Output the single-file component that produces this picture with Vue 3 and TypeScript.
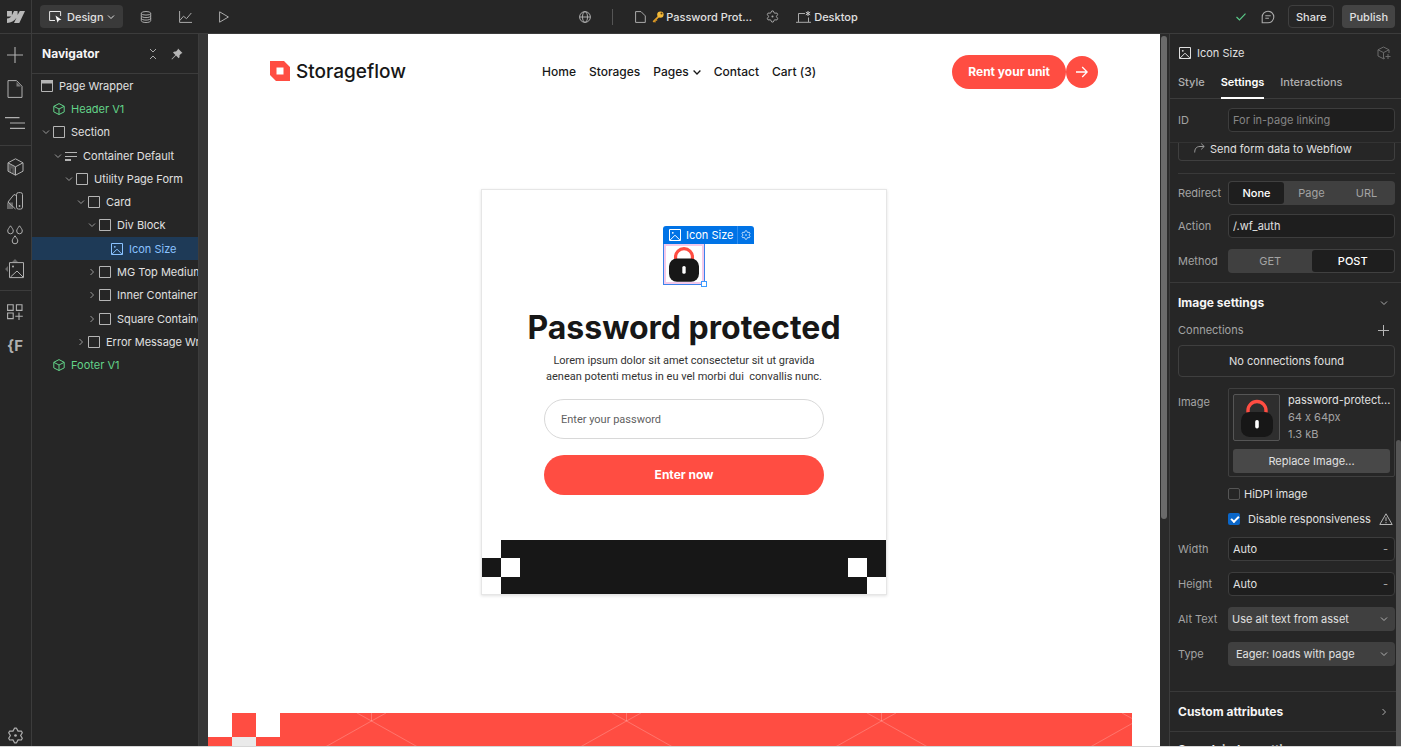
<script setup lang="ts">
import { ref } from 'vue'

interface TreeNode {
  label: string
  depth: number
  icon: 'page' | 'cube' | 'box' | 'lines' | 'image'
  arrow?: 'down' | 'right'
  green?: boolean
  selected?: boolean
}

const tree: TreeNode[] = [
  { label: 'Page Wrapper', depth: 0, icon: 'page' },
  { label: 'Header V1', depth: 1, icon: 'cube', green: true },
  { label: 'Section', depth: 1, icon: 'box', arrow: 'down' },
  { label: 'Container Default', depth: 2, icon: 'lines', arrow: 'down' },
  { label: 'Utility Page Form', depth: 3, icon: 'box', arrow: 'down' },
  { label: 'Card', depth: 4, icon: 'box', arrow: 'down' },
  { label: 'Div Block', depth: 5, icon: 'box', arrow: 'down' },
  { label: 'Icon Size', depth: 6, icon: 'image', selected: true },
  { label: 'MG Top Medium', depth: 5, icon: 'box', arrow: 'right' },
  { label: 'Inner Container', depth: 5, icon: 'box', arrow: 'right' },
  { label: 'Square Container', depth: 5, icon: 'box', arrow: 'right' },
  { label: 'Error Message Wrapper', depth: 4, icon: 'box', arrow: 'right' },
  { label: 'Footer V1', depth: 1, icon: 'cube', green: true },
]

const railGroups: { name: string; label: string }[][] = [
  [
    { name: 'plus', label: 'Add elements' },
    { name: 'file', label: 'Pages' },
    { name: 'nav', label: 'Navigator' },
  ],
  [
    { name: 'block', label: 'Components' },
    { name: 'swatch', label: 'Variables' },
    { name: 'drops', label: 'Style selectors' },
    { name: 'assets', label: 'Assets' },
  ],
  [
    { name: 'apps', label: 'Apps' },
    { name: 'finsweet', label: 'Finsweet' },
  ],
]

const tabs = ['Style', 'Settings', 'Interactions']
const activeTab = ref('Settings')
const redirects = ['None', 'Page', 'URL']
const redirect = ref('None')
const methods = ['GET', 'POST']
const method = ref('POST')
const elementId = ref('')
const action = ref('/.wf_auth')
const width = ref('Auto')
const height = ref('Auto')
const hidpi = ref(false)
const fixedSize = ref(true)
const password = ref('')
</script>

<template>
  <div class="app">
    <svg class="defs" aria-hidden="true">
      <symbol id="i-page" viewBox="0 0 12 12"><path d="M.5 .5h11v11H.5z" fill="none" stroke="currentColor" /><path d="M0 0h12v3.500H0z" fill="currentColor" /></symbol>
      <symbol id="i-box" viewBox="0 0 12 12"><path d="M.5 .5h11v11H.5z" fill="none" stroke="currentColor" /></symbol>
      <symbol id="i-lines" viewBox="0 0 12 12"><path d="M0 2.500h12M0 6.500h12" stroke="currentColor" fill="none" /><path d="M0 9h6v2H0z" fill="currentColor" /></symbol>
      <symbol id="i-cube" viewBox="0 0 12 12"><path d="M6 .6l5.200 2.700v5.600L6 11.500 .8 8.900V3.300zM.8 3.300L6 6l5.200-2.700M6 6v5.500" fill="none" stroke="currentColor" stroke-linejoin="round" /></symbol>
      <symbol id="i-image" viewBox="0 0 12 12"><path d="M.5 .5h11v11H.5zM1 11.200l5-5 5 5" fill="none" stroke="currentColor" /><circle cx="3.800" cy="3.800" r=".9" fill="currentColor" /></symbol>
      <symbol id="i-down" viewBox="0 0 8 8"><path d="M1 2.500l3 3 3-3" fill="none" stroke="currentColor" /></symbol>
      <symbol id="i-right" viewBox="0 0 8 8"><path d="M2.500 1l3 3-3 3" fill="none" stroke="currentColor" /></symbol>
      <symbol id="i-gear" viewBox="0 0 14 14"><path d="M6.200 1h1.600l1.300 2.400 2.700-.1.800 1.400L11.200 7l1.400 2.300-.8 1.400-2.700-.1L7.800 13H6.200l-1.300-2.400-2.700.1-.8-1.400L2.800 7 1.400 4.700l.8-1.400 2.700.1z" fill="none" stroke="currentColor" stroke-linejoin="round" /><circle cx="7" cy="7" r="1.100" fill="currentColor" /></symbol>
      <symbol id="i-lock" viewBox="0 0 32 38"><path d="M7 16v-4.500a9 9 0 0 1 18 0V16" fill="none" stroke="#ff4d42" stroke-width="3.400" /><rect x="0" y="13" width="32" height="25" rx="8.500" fill="#171717" /><rect x="14.200" y="21" width="3.600" height="8.500" rx="1.700" fill="#fff" /></symbol>
    </svg>

    <header class="topbar">
      <div class="top-left">
        <a class="brand" href="#" aria-label="Webflow">
          <svg width="18" height="12" viewBox="0 0 18 12"><path d="M18 0l-5.700 12H7l2.400-4.900h-.1C7.300 9.900 4.300 11.700 0 12V7.400s2.800-.2 4.400-2H0V0h4.900v4.200L7 0h3.600v4.100L12.800 0z" fill="#b8b8b8" /></svg>
        </a>
        <button class="design" type="button">
          <svg width="13" height="12" viewBox="0 0 13 12"><path d="M6 9.500H.6v-9h11V5" fill="none" stroke="#e6e6e6" /><path d="M6.500 4.500l6 4.200-2.600.5-1.400 2.600z" fill="#f5f5f5" /></svg>
          Design
          <svg width="8" height="8"><use href="#i-down" /></svg>
        </button>
        <div class="top-tools">
          <button type="button" aria-label="CMS"><svg width="12" height="12" viewBox="0 0 12 12"><g fill="none" stroke="currentColor"><ellipse cx="6" cy="2.300" rx="4.700" ry="1.800" /><path d="M1.300 2.300v7.400c0 1 2 1.800 4.700 1.800s4.700-.8 4.700-1.800V2.300M1.300 4.800c0 1 2 1.800 4.700 1.800s4.700-.8 4.700-1.800M1.300 7.300c0 1 2 1.800 4.700 1.800s4.700-.8 4.700-1.800" /></g></svg></button>
          <button type="button" aria-label="Insights"><svg width="13" height="12" viewBox="0 0 13 12"><path d="M.6 0v11.400H13M.8 9.500l3.700-4.300 3 2.500L12.300 2" fill="none" stroke="currentColor" /></svg></button>
          <button type="button" aria-label="Preview"><svg width="12" height="12" viewBox="0 0 12 12"><path d="M1.600 .8v10.400L10.400 6z" fill="none" stroke="currentColor" stroke-linejoin="round" /></svg></button>
        </div>
      </div>

      <div class="top-mid">
        <button type="button" aria-label="Locale"><svg width="12" height="12" viewBox="0 0 12 12"><g fill="none" stroke="currentColor"><circle cx="6" cy="6" r="5.400" /><ellipse cx="6" cy="6" rx="2.500" ry="5.400" /><path d="M.6 6h10.800" /></g></svg></button>
        <span class="divider"></span>
        <button class="page-name" type="button">
          <svg width="11" height="12" viewBox="0 0 11 12"><path d="M.6 .6h5.400l4.300 4.300v6.500H.6z" fill="none" stroke="#aaa" /></svg>
          <svg class="key" width="12" height="12" viewBox="0 0 12 12"><path d="M6.800 5.300L1.200 10.900" stroke="#e3a32c" stroke-width="1.700" /><path d="M2 9.800l1.500 1.500M3.600 8.200l1.400 1.400" stroke="#d68f20" stroke-width="1.300" /><circle cx="8.400" cy="3.600" r="3.200" fill="#f2b938" /><circle cx="9.500" cy="2.500" r="1" fill="#5a3b12" /></svg>
          <span>Password Prot...</span>
        </button>
        <button class="gear" type="button" aria-label="Page settings"><svg width="13" height="13"><use href="#i-gear" /></svg></button>
        <button class="desktop" type="button">
          <svg width="15" height="12" viewBox="0 0 15 12"><path d="M2.500 11V2.500H9M12.500 6.500V11M0 11.300h15" fill="none" stroke="#aaa" /><path d="M12 0v5M9.800 1.200l4.400 2.600M14.200 1.200L9.800 3.800" stroke="#ccc" fill="none" /></svg>
          Desktop
        </button>
      </div>

      <div class="top-right">
        <svg class="check" width="10" height="8" viewBox="0 0 10 8"><path d="M.5 4l3 3 6-6.300" fill="none" stroke="#5ac988" stroke-width="1.200" /></svg>
        <button class="comment" type="button" aria-label="Comments"><svg width="14" height="14" viewBox="0 0 14 14"><path d="M1.200 12.800V7a5.800 5.800 0 1 1 5.800 5.800zM4.300 5.700h5.400M4.300 8.300h3.600" fill="none" stroke="currentColor" stroke-width="1.100" /></svg></button>
        <button class="share" type="button">Share</button>
        <button class="publish" type="button">Publish</button>
      </div>
    </header>

    <div class="workspace">
      <nav class="rail" aria-label="Tools">
        <div v-for="(group, g) in railGroups" :key="g" class="rail-group">
          <button v-for="tool in group" :key="tool.name" type="button" :aria-label="tool.label">
            <svg v-if="tool.name === 'plus'" width="16" height="16" viewBox="0 0 16 16"><path d="M8 0v16M0 8h16" stroke="currentColor" fill="none" stroke-width="1.100" /></svg>
            <svg v-else-if="tool.name === 'file'" width="16" height="18" viewBox="0 0 16 18"><path d="M1 .6h8.500L15 6.300V17.400H1z" fill="none" stroke="currentColor" /><path d="M9.500 2v4.500H14z" fill="#777" /></svg>
            <svg v-else-if="tool.name === 'nav'" width="20" height="12" viewBox="0 0 20 12"><path d="M0 .6h14.500M5 6h15M5 11.400h15" stroke="currentColor" fill="none" stroke-width="1.100" /></svg>
            <svg v-else-if="tool.name === 'block'" width="17" height="18" viewBox="0 0 17 18"><path d="M1 5l7.500 4v8L1 13z" fill="#555" /><path d="M8.500 .8L16 4.800v8.400l-7.500 4-7.500-4V4.800zM1 4.800l7.500 4 7.500-4M8.500 8.800v8.400" fill="none" stroke="currentColor" stroke-linejoin="round" /><path d="M4.800 10.500v3.800M10 5l-3 1.500" stroke="#262626" /></svg>
            <svg v-else-if="tool.name === 'swatch'" width="17" height="18" viewBox="0 0 17 18"><path d="M0 10.500h6V17H0z" fill="#666" /><rect x="9.500" y=".6" width="6" height="16.500" rx="2" fill="none" stroke="currentColor" /><path d="M9.500 3.500L7 2.500 1 10l7.500 7" fill="none" stroke="currentColor" stroke-linejoin="round" /><circle cx="12.500" cy="14" r=".9" fill="currentColor" /></svg>
            <svg v-else-if="tool.name === 'drops'" width="16" height="20" viewBox="0 0 16 20"><g fill="none" stroke="currentColor"><path d="M3.500 .8C5 3 6.300 4.400 6.300 6a2.800 2.800 0 0 1-5.600 0C.7 4.400 2 3 3.500 .8zM12.500 .8c1.500 2.200 2.800 3.600 2.800 5.200a2.800 2.800 0 0 1-5.600 0c0-1.600 1.300-3 2.800-5.200zM8 10.800c1.500 2.200 2.800 3.600 2.800 5.200a2.800 2.800 0 0 1-5.600 0c0-1.600 1.300-3 2.800-5.200z" /></g></svg>
            <svg v-else-if="tool.name === 'assets'" width="20" height="20" viewBox="0 0 20 20"><path d="M7 3l3-3 3 3zM3 7L0 10l3 3z" fill="#666" /><path d="M4.500 3.600h14v15h-14zM5.500 18l6.500-6 6 6" fill="none" stroke="currentColor" /><circle cx="8" cy="7.500" r="1" fill="currentColor" /></svg>
            <svg v-else-if="tool.name === 'apps'" width="16" height="16" viewBox="0 0 16 16"><path d="M.6 .8h5.600v5.600H.6zM9.400 .8H15v5.600H9.400zM.6 9h5.600v5.600H.6zM12 8.500V16M8.300 12.200h7.500" fill="none" stroke="currentColor" stroke-width="1.100" /></svg>
            <span v-else class="fs">{F</span>
          </button>
        </div>
        <button class="rail-end" type="button" aria-label="Project settings"><svg width="17" height="17"><use href="#i-gear" /></svg></button>
      </nav>

      <aside class="navigator">
        <div class="nav-head">
          <h2>Navigator</h2>
          <button type="button" aria-label="Collapse all"><svg width="8" height="12" viewBox="0 0 8 12"><path d="M1 1l3 3 3-3M1 11l3-3 3 3" fill="none" stroke="currentColor" /></svg></button>
          <button type="button" aria-label="Pin"><svg width="12" height="12" viewBox="0 0 12 12"><path d="M7 .5L11.500 5l-1.200.4-1.800 1.800c.3 1.300 0 2.200-.8 3L5 7.600 1 11.500.5 11l3.900-4L2 4.400c.8-.8 1.700-1.100 3-.8l1.700-1.800z" fill="#b5b5b5" /></svg></button>
        </div>
        <ul class="tree">
          <li v-for="node in tree" :key="node.label" :class="['depth-' + node.depth, { green: node.green, selected: node.selected }]">
            <svg v-if="node.arrow" class="arrow" width="8" height="8"><use :href="'#i-' + node.arrow" /></svg>
            <span v-else class="arrow"></span>
            <svg class="kind" width="12" height="12"><use :href="'#i-' + node.icon" /></svg>
            <span class="name">{{ node.label }}</span>
          </li>
        </ul>
      </aside>

      <main class="canvas">
        <div class="site">
          <header class="site-head">
            <a class="logo" href="#">
              <svg width="20" height="20" viewBox="0 0 20 20"><path d="M0 0h14L20 6V20H6L0 14zM6.500 6.500v7h7v-7z" fill="#ff4d42" fill-rule="evenodd" /></svg>
              Storageflow
            </a>
            <nav class="links">
              <a href="#">Home</a>
              <a href="#">Storages</a>
              <a href="#">Pages <svg width="8" height="8" viewBox="0 0 8 8"><path d="M.6 2.500L4 6l3.400-3.500" fill="none" stroke="#171717" stroke-width="1.300" /></svg></a>
              <a href="#">Contact</a>
              <a href="#">Cart (3)</a>
            </nav>
            <a class="cta" href="#">
              <span>Rent your unit</span>
              <i><svg width="12" height="12" viewBox="0 0 12 12"><path d="M0 6h11.200M6.200 1l5 5-5 5" fill="none" stroke="#fff" stroke-width="1.300" /></svg></i>
            </a>
          </header>

          <section class="card">
            <div class="picked">
              <svg width="30" height="36"><use href="#i-lock" /></svg>
              <div class="tag">
                <svg width="12" height="12"><use href="#i-image" /></svg>
                <span>Icon Size</span>
                <button type="button" aria-label="Element settings"><svg width="10" height="10"><use href="#i-gear" /></svg></button>
              </div>
              <span class="handle"></span>
            </div>
            <h1>Password protected</h1>
            <p>Lorem ipsum dolor sit amet consectetur sit ut gravida<br />aenean potenti metus in eu vel morbi dui&nbsp; convallis nunc.</p>
            <form @submit.prevent>
              <input v-model="password" type="password" placeholder="Enter your password" aria-label="Password" />
              <button type="submit">Enter now</button>
            </form>
            <div class="band">
              <div class="corner"><b></b><i></i><i></i><b></b><b></b><i></i></div>
              <div class="corner"><i></i><i></i><b></b><i></i><i></i><b></b></div>
            </div>
          </section>

          <footer class="site-foot">
            <svg width="100%" height="100%">
              <defs>
                <pattern id="rays" x="36" width="255" height="60" patternUnits="userSpaceOnUse">
                  <path d="M127.500 8V0M127.500 8L113 0M127.500 8L142 0M127.500 8L35 60M127.500 8L220 60" stroke="#fff" stroke-opacity=".22" fill="none" />
                </pattern>
              </defs>
              <rect width="100%" height="100%" fill="url(#rays)" />
            </svg>
            <div class="squares"><b></b><i></i><b></b><i></i><em></em><i></i></div>
          </footer>
        </div>
      </main>
      <div class="canvas-scroll"><span></span></div>

      <aside class="panel">
        <div class="panel-head">
          <svg width="12" height="12"><use href="#i-image" /></svg>
          <span>Icon Size</span>
          <button type="button" aria-label="Create component"><svg width="14" height="14" viewBox="0 0 14 14"><path d="M8 12l-1.500.8L1 10V3.800L6.500 1 12 3.800V7M1 3.800l5.500 2.800L12 3.800M6.500 6.600v6.200M8.500 10.500h5M11 8v5" fill="none" stroke="currentColor" /></svg></button>
        </div>
        <div class="tabs" role="tablist">
          <button v-for="tab in tabs" :key="tab" type="button" role="tab" :aria-selected="tab === activeTab" :class="{ on: tab === activeTab }" @click="activeTab = tab">{{ tab }}</button>
        </div>
        <div class="id-row row">
          <label for="el-id">ID</label>
          <input id="el-id" v-model="elementId" placeholder="For in-page linking" />
        </div>

        <div class="panel-body">
          <div class="panel-content">
            <div class="pad">
              <button class="send" type="button"><svg width="11" height="10" viewBox="0 0 11 10"><path d="M.7 9.500C.7 5.500 2.500 3.500 6 3.500h4.200M7.200 .6l3 2.900-3 2.900" fill="none" stroke="#999" /></svg>Send form data to Webflow</button>
            </div>
            <hr class="inset" />
            <div class="row r1">
              <span id="l-redirect">Redirect</span>
              <div class="seg" role="group" aria-labelledby="l-redirect">
                <button v-for="r in redirects" :key="r" type="button" :class="{ on: r === redirect }" @click="redirect = r">{{ r }}</button>
              </div>
            </div>
            <div class="row r2">
              <label for="action">Action</label>
              <input id="action" v-model="action" />
            </div>
            <div class="row r1">
              <span id="l-method">Method</span>
              <div class="seg" role="group" aria-labelledby="l-method">
                <button v-for="m in methods" :key="m" type="button" :class="{ on: m === method }" @click="method = m">{{ m }}</button>
              </div>
            </div>
            <hr />
            <div class="section-head"><h3>Image settings</h3><svg width="8" height="8"><use href="#i-down" /></svg></div>
            <div class="connections"><span>Connections</span><button type="button" aria-label="Add connection"><svg width="11" height="11" viewBox="0 0 11 11"><path d="M5.500 0v11M0 5.500h11" stroke="currentColor" fill="none" /></svg></button></div>
            <div class="pad"><div class="none">No connections found</div></div>
            <div class="row top">
              <span class="lift">Image</span>
              <div class="asset">
                <div class="asset-info">
                  <div class="thumb"><svg width="32" height="38"><use href="#i-lock" /></svg></div>
                  <div class="meta"><b>password-protect...</b><span>64 x 64px</span><span>1.3 kB</span></div>
                </div>
                <button type="button">Replace Image...</button>
              </div>
            </div>
            <div class="tick"><input id="hidpi" v-model="hidpi" type="checkbox" /><label for="hidpi">HiDPI image</label></div>
            <div class="tick far"><input id="fixed" v-model="fixedSize" type="checkbox" /><label for="fixed">Disable responsiveness</label>
              <svg width="14" height="12" viewBox="0 0 14 12"><path d="M7 .8l6.200 10.700H.8zM7 4.300v3.800M7 9v1.300" fill="none" stroke="#b5b5b5" stroke-linejoin="round" /></svg>
            </div>
            <div class="row r2"><label for="w">Width</label><div class="unit"><input id="w" v-model="width" /><span>-</span></div></div>
            <div class="row r2"><label for="h">Height</label><div class="unit"><input id="h" v-model="height" /><span>-</span></div></div>
            <div class="row r2"><label for="alt">Alt Text</label>
              <div class="pick"><select id="alt"><option>Use alt text from asset</option><option>Decorative</option></select><svg width="8" height="8"><use href="#i-down" /></svg></div>
            </div>
            <div class="row last"><label for="load">Type</label>
              <div class="pick"><select id="load" class="indent"><option>Eager: loads with page</option><option>Lazy: loads on scroll</option></select><svg width="8" height="8"><use href="#i-down" /></svg></div>
            </div>
            <hr />
            <div class="section-head"><h3>Custom attributes</h3><svg width="8" height="8"><use href="#i-right" /></svg></div>
            <hr />
            <div class="section-head next"><h3>Search index settings</h3></div>
          </div>
          <div class="panel-thumb"></div>
        </div>
      </aside>
    </div>
  </div>
</template>

<style>
body { background: #262626; }
</style>

<style scoped>
* { box-sizing: border-box; }
.app {
  display: flex;
  flex-direction: column;
  height: 100vh;
  overflow: hidden;
  background: #262626;
  border-bottom: 1px solid #d6d6d6;
  color: #e0e0e0;
  font: 11px/16px Inter, "Liberation Sans", sans-serif;
  font-feature-settings: "calt" 0;
}
.defs { position: absolute; width: 0; height: 0; }
svg { display: block; flex: none; }
button, input, select { font: inherit; color: inherit; margin: 0; }
button { border: 0; padding: 0; background: none; }
a { color: inherit; text-decoration: none; }
h1, h2, h3, p, ul { margin: 0; padding: 0; }
hr { border: 0; border-top: 1px solid #393939; margin: 0; }

.topbar {
  display: grid;
  grid-template-columns: 1fr auto 1fr;
  flex: none;
  height: 34px;
  border-bottom: 1px solid #3c3c3c;
}
.topbar button, .top-left, .top-mid, .top-right, .top-tools { display: flex; align-items: center; }
.brand { display: flex; align-items: center; width: 32px; height: 33px; padding-left: 7px; border-right: 1px solid #3c3c3c; }
.design { height: 23px; margin-left: 8px; padding: 0 8px 0 9px; gap: 5px; border-radius: 4px; background: #3a3a3a; font-weight: 500; }
.design svg:last-child { margin-left: -2px; }
.top-tools { margin-left: 4px; }
.top-tools button { width: 39px; height: 33px; justify-content: center; color: #aaa; }
.top-mid { padding-left: 36px; color: #aaa; }
.divider { width: 1px; height: 16px; margin: 0 22px 0 21px; background: #555; }
.page-name { gap: 6px; color: #e0e0e0; font-weight: 500; }
.page-name .key { margin-right: -4px; }
.gear { margin: 0 17px 0 14px; color: #aaa; }
.desktop { gap: 3px; color: #e0e0e0; font-weight: 500; }
.top-right { justify-content: flex-end; padding-right: 6px; }
.check { margin-right: 15px; }
.comment { margin-right: 13px; color: #aaa; }
.share, .publish { height: 23px; border-radius: 4px; font-weight: 500; }
.share { margin-right: 8px; padding: 0 7px; border: 1px solid #3f3f3f; }
.publish { padding: 0 7px; background: #444; }

.workspace { display: flex; flex: 1; min-height: 0; }
.rail { display: flex; flex-direction: column; flex: none; width: 32px; border-right: 1px solid #3c3c3c; color: #b0b0b0; }
.rail-group { padding: 4px 0; border-bottom: 1px solid #3c3c3c; }
.rail-group:first-child { padding-bottom: 5px; }
.rail-group:nth-child(3) { border-bottom: 0; }
.rail button { display: flex; align-items: center; justify-content: center; width: 30px; height: 34px; }
.rail .rail-end { height: 22px; margin-top: auto; }
.fs { font-size: 15px; font-weight: 700; }

.navigator { flex: none; width: 167px; border-right: 1px solid #3c3c3c; overflow: hidden; }
.nav-head { display: flex; align-items: center; height: 40px; padding: 0 15px 0 10px; border-bottom: 1px solid #3c3c3c; color: #aaa; }
.nav-head h2 { flex: 1; color: #f5f5f5; font-size: 12px; font-weight: 700; }
.nav-head button + button { margin-left: 14px; }
.tree { display: grid; grid-auto-rows: 1fr; height: 303px; list-style: none; }
.tree li { display: flex; align-items: center; white-space: nowrap; }
.arrow { flex: none; width: 8px; margin-right: 3px; color: #999; }
.kind { margin-right: 6px; color: #b5b5b5; }
.green, .green .kind { color: #63d489; }
.selected { background: #1e3a57; }
.selected, .selected .kind { color: #8ac2ff; }
.depth-0 .arrow { margin-right: 1px; }
.depth-1 { padding-left: 10px; }
.depth-2 { padding-left: 22px; }
.depth-3 { padding-left: 33px; }
.depth-4 { padding-left: 45px; }
.depth-5 { padding-left: 56px; }
.depth-6 { padding-left: 68px; }

.canvas { flex: 1; min-width: 0; padding-left: 9px; background: #363636; overflow: hidden; }
.site { height: 100%; background: #fff; color: #171717; overflow: hidden; }
.site-head { display: flex; align-items: center; justify-content: space-between; height: 76px; padding: 0 62px; }
.logo { display: flex; align-items: center; gap: 6px; font-size: 19px; font-weight: 500; line-height: 24px; }
.logo svg { margin-bottom: 2px; }
.links { display: flex; gap: 13px; font-size: 12px; font-weight: 500; }
.links a { display: flex; align-items: center; gap: 4px; }
.cta { display: flex; align-items: center; color: #fff; font-size: 12px; font-weight: 700; }
.cta span { padding: 9px 16px; border-radius: 17px; background: #ff4d42; }
.cta i { display: flex; align-items: center; justify-content: center; width: 32px; height: 32px; border-radius: 50%; background: #ff4d42; }

.card {
  width: 406px;
  margin: 79px auto 118px;
  padding-top: 53px;
  border: 1px solid #e6e6e6;
  box-shadow: 0 1px 3px rgba(0, 0, 0, .12);
  text-align: center;
}
.picked {
  position: relative;
  display: flex;
  justify-content: center;
  width: 42px;
  height: 42px;
  margin: 0 auto;
  padding-top: 2px;
  border: 1px solid #3b82ea;
  box-shadow: inset 0 0 0 2px #f3c9ea;
}
.tag {
  position: absolute;
  left: -1px;
  bottom: 40px;
  display: flex;
  align-items: center;
  height: 18px;
  padding-left: 6px;
  border-radius: 3px 3px 0 0;
  background: #0073e6;
  color: #fff;
  white-space: nowrap;
}
.tag span { margin: 0 4px 0 5px; }
.tag button { display: flex; align-items: center; height: 18px; padding: 0 3px; border-left: 1px solid #2f8df0; }
.handle { position: absolute; right: -3px; bottom: -3px; width: 6px; height: 6px; border: 1px solid #3b9bff; background: #fff; }
h1 { margin-top: 23px; font-size: 32px; font-weight: 700; line-height: 40px; }
.card p, form input { font-family: Roboto, Inter, sans-serif; }
.card p { margin-top: 5px; color: #333; white-space: nowrap; }
form { width: 280px; margin: 14px auto 45px; }
form input { display: block; width: 100%; height: 40px; padding: 0 16px; border: 1px solid #d8d8d8; border-radius: 20px; background: #fff; outline: 0; }
form input::placeholder { color: #5f5f5f; opacity: 1; }
form button { display: block; width: 100%; height: 40px; margin-top: 16px; border-radius: 20px; background: #ff4d42; color: #fff; font-size: 12px; font-weight: 700; }
.band { display: flex; justify-content: space-between; height: 54px; background: #171717; }
.corner { display: grid; grid-template-columns: 19px 19px; grid-template-rows: 18px 19px 17px; }
.corner b, .squares b { background: #fff; }

.site-foot { position: relative; height: 120px; margin-right: 28px; background: #ff4d42; }
.squares { position: absolute; left: 0; top: 0; display: grid; grid-template-columns: repeat(3, 24px); grid-auto-rows: 24px; }
.squares em { background: #eaeaea; }
.squares i { background: #ff4d42; }

.canvas-scroll { flex: none; width: 9px; padding: 2px 2px 0 1px; background: #2a2a2a; }
.canvas-scroll span { display: block; height: 68%; border-radius: 3px; background: #6a6a6a; }

.panel { display: flex; flex-direction: column; flex: none; width: 232px; border-left: 1px solid #3c3c3c; }
.panel-head { display: flex; align-items: center; flex: none; height: 38px; padding: 0 10px 0 9px; color: #e0e0e0; }
.panel-head span { flex: 1; margin-left: 6px; }
.panel-head button { color: #6a6a6a; }
.tabs { display: flex; flex: none; gap: 16px; height: 27px; padding-left: 8px; border-bottom: 1px solid #3c3c3c; }
.tabs button { height: 27px; padding-bottom: 5px; border-bottom: 2px solid transparent; color: #b0b0b0; font-weight: 500; }
.tabs .on { border-color: #fff; color: #fff; font-weight: 600; }
.row { display: grid; grid-template-columns: 50px 1fr; align-items: center; padding: 0 6px 0 8px; }
.row > label, .row > span, .connections span { color: #a3a3a3; }
.row input { width: 100%; min-width: 0; height: 24px; padding: 0 4px; border: 1px solid #3d3d3d; border-radius: 4px; background: #1e1e1e; outline: 0; }
.row input::placeholder { color: #858585; opacity: 1; }
.id-row { flex: none; height: 44px; padding-bottom: 1px; border-bottom: 1px solid #333; }
.panel-body { position: relative; flex: 1; min-height: 0; overflow: hidden; }
.pad { padding: 0 6px 0 8px; }
.send { display: flex; align-items: flex-start; width: 100%; height: 18px; padding-left: 15px; gap: 5px; border: 1px solid #3f3f3f; border-top: 0; border-radius: 0 0 4px 4px; line-height: 12px; }
.inset { margin: 12px 6px 7px 8px; }
.r1 { margin-bottom: 9px; }
.r2 { margin-bottom: 11px; }
.last { margin-bottom: 25px; }
.seg { display: grid; grid-auto-flow: column; grid-auto-columns: 1fr; height: 24px; padding: 1px; border-radius: 4px; background: #404040; color: #a3a3a3; }
.seg .on { border-radius: 3px; background: #1e1e1e; color: #fff; font-weight: 500; }
.section-head { display: flex; align-items: center; justify-content: space-between; height: 39px; padding: 0 13px 0 8px; color: #aaa; }
.section-head h3 { color: #f5f5f5; font-size: 12px; font-weight: 700; }
.next { height: 36px; }
.connections { display: flex; align-items: center; justify-content: space-between; height: 16px; margin-bottom: 7px; padding: 0 12px 0 8px; color: #b5b5b5; }
.none { height: 32px; margin-bottom: 11px; border: 1px solid #3f3f3f; border-radius: 4px; line-height: 30px; text-align: center; }
.top { align-items: start; margin-bottom: 9px; }
.lift { padding-top: 6px; }
.asset { min-width: 0; padding: 5px 4px 3px; border: 1px solid #3f3f3f; border-radius: 2px; }
.asset-info { display: flex; height: 47px; }
.thumb { display: flex; align-items: center; justify-content: center; flex: none; width: 47px; height: 47px; border: 1px solid #555; border-radius: 2px; background: #2e2e2e; }
.meta { display: grid; grid-auto-rows: 17px; margin: -2px 0 0 8px; white-space: nowrap; color: #a3a3a3; }
.meta b { color: #e0e0e0; font-weight: 400; }
.asset button { width: 100%; height: 24px; margin-top: 8px; border-radius: 3px; background: #484848; }
.tick { display: flex; align-items: center; height: 16px; margin: 0 0 9px 58px; }
.tick input { appearance: none; flex: none; width: 12px; height: 12px; margin-right: 4px; border: 1px solid #555; border-radius: 2px; }
.tick input:checked { border: 0; background: #0a66c8; }
.tick input:checked::before { content: ""; display: block; width: 6px; height: 3px; margin: 3px 0 0 3px; border: solid #fff; border-width: 0 0 2px 2px; rotate: -45deg; }
.far { margin-bottom: 10px; }
.far input { margin-right: 8px; }
.far svg { margin-left: 8px; }
.unit, .pick { position: relative; }
.unit span { position: absolute; right: 7px; top: 4px; color: #aaa; }
.pick select { appearance: none; display: block; width: 100%; height: 24px; padding: 0 4px; border: 0; border-radius: 4px; background: #404040; outline: 0; }
.pick select.indent { padding-left: 8px; }
.pick svg { position: absolute; right: 7px; top: 8px; color: #b0b0b0; }
.panel-thumb { position: absolute; right: 0; top: 297px; bottom: 0; width: 5px; border-radius: 3px 3px 0 0; background: #555; }
</style>
